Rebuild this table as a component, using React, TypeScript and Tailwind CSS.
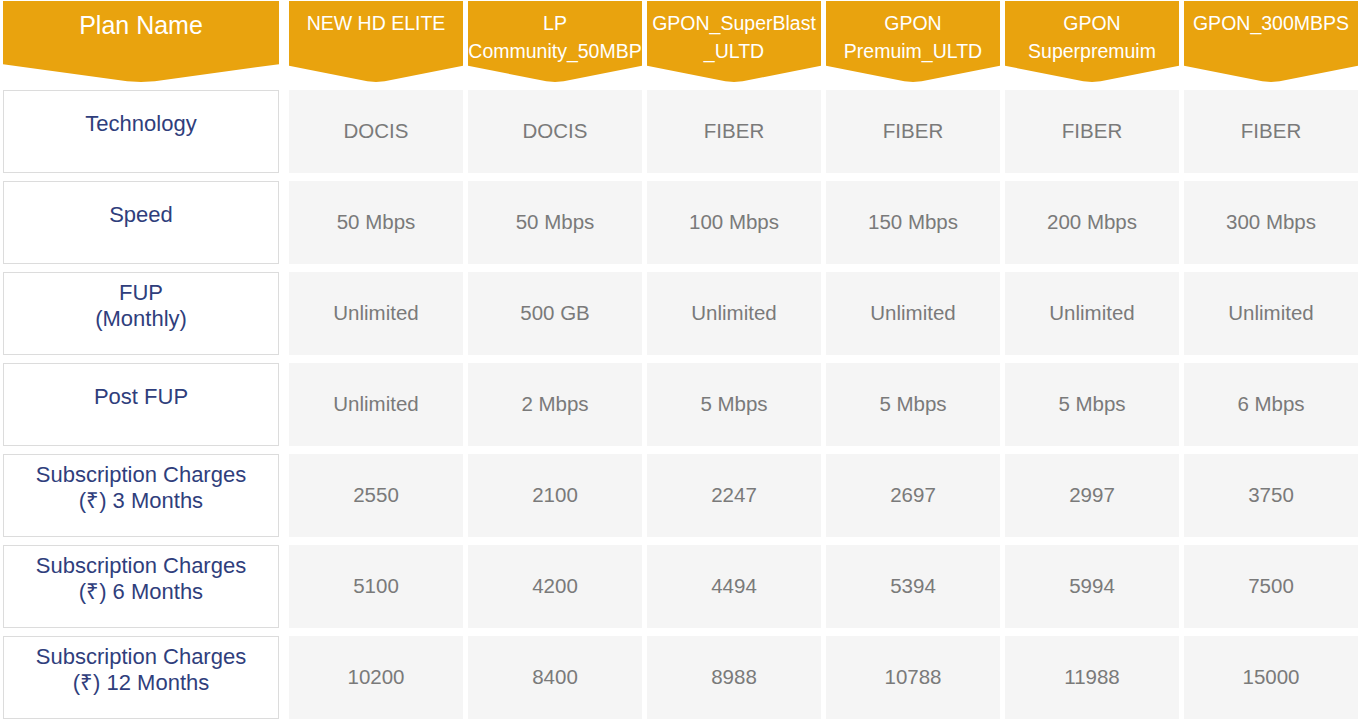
import React from "react";

const heads: React.ReactNode[] = [
  <>NEW HD ELITE</>,
  <>LP<br />Community_50MBP</>,
  <>GPON_SuperBlast<br />_ULTD</>,
  <>GPON<br />Premuim_ULTD</>,
  <>GPON<br />Superpremuim</>,
  <>GPON_300MBPS</>,
];

const rows: { label: React.ReactNode; vals: string[] }[] = [
  { label: <>Technology</>, vals: ["DOCIS", "DOCIS", "FIBER", "FIBER", "FIBER", "FIBER"] },
  { label: <>Speed</>, vals: ["50 Mbps", "50 Mbps", "100 Mbps", "150 Mbps", "200 Mbps", "300 Mbps"] },
  { label: <>FUP<br />(Monthly)</>, vals: ["Unlimited", "500 GB", "Unlimited", "Unlimited", "Unlimited", "Unlimited"] },
  { label: <>Post FUP</>, vals: ["Unlimited", "2 Mbps", "5 Mbps", "5 Mbps", "5 Mbps", "6 Mbps"] },
  { label: <>Subscription Charges<br />(₹) 3 Months</>, vals: ["2550", "2100", "2247", "2697", "2997", "3750"] },
  { label: <>Subscription Charges<br />(₹) 6 Months</>, vals: ["5100", "4200", "4494", "5394", "5994", "7500"] },
  { label: <>Subscription Charges<br />(₹) 12 Months</>, vals: ["10200", "8400", "8988", "10788", "11988", "15000"] },
];

export default function App() {
  return (
    <div
      className="w-[1363px] h-[723px] bg-white pt-[1px] pl-[3px] overflow-hidden"
      style={{ fontFamily: '"Liberation Sans", Arial, sans-serif' }}
    >
      <div className="grid grid-cols-[281px_repeat(6,174px)] gap-x-[5px] gap-y-[8px] grid-rows-[81px_repeat(7,83px)]">
        <div className="w-[276px]">
          <div className="h-full bg-[#e9a30e] [clip-path:polygon(0_0,100%_0,100%_78%,55%_99%,50%_100%,45%_99%,0_78%)] text-white text-[25px] leading-[28px] text-center pt-[10px]">
            Plan Name
          </div>
        </div>
        {heads.map((h, i) => (
          <div
            key={i}
            className="bg-[#e9a30e] [clip-path:polygon(0_0,100%_0,100%_80%,55%_99%,50%_100%,45%_99%,0_80%)] text-white text-[19.5px] leading-[28px] text-center pt-[8px] overflow-hidden whitespace-nowrap"
          >
            {h}
          </div>
        ))}
        {rows.map((r, ri) => (
          <React.Fragment key={ri}>
            <div className="w-[276px] border border-[#dcdcdc] bg-white flex items-center justify-center pb-[16px] text-center text-[#2f3e7c] text-[22px] leading-[26px]">
              <div>{r.label}</div>
            </div>
            {r.vals.map((v, vi) => (
              <div
                key={vi}
                className="bg-[#f5f5f5] flex items-center justify-center text-[#7a7a7a] text-[20.5px]"
              >
                {v}
              </div>
            ))}
          </React.Fragment>
        ))}
      </div>
    </div>
  );
}
